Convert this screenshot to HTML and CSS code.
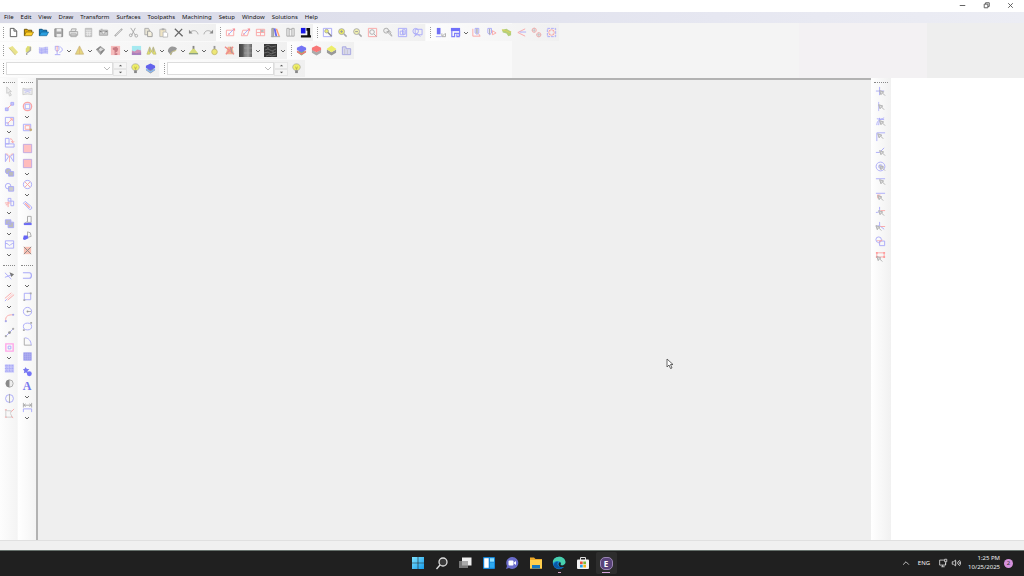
FILE: index.html
```
<!DOCTYPE html>
<html lang="en">
<head>
<meta charset="utf-8">
<title>CAM Workspace</title>
<link rel="stylesheet" href="styles.css">
</head>
<body>
<svg class="sprite" aria-hidden="true">
  <symbol id="chev" viewBox="0 0 6 6"><path d="M1 2l2 2 2-2" fill="none" stroke="#666"/></symbol>
  <symbol id="lens" viewBox="0 0 12 12"><circle cx="5" cy="5" r="3.200"/><path d="M7.500 7.500l3 3" stroke-width="1.600"/></symbol>
  <symbol id="arrow" viewBox="0 0 12 12"><path d="M5 5l4.500 1.500-1.500 1 3 3M5 5l1.500 4.500 1-1.500" fill="#ccc" stroke="#b0b0b0"/></symbol>
  <symbol id="bulb" viewBox="0 0 12 12"><path d="M4 8C2 6 1.500 5 2 3.500 3 0 9 0 10 3.500 10.500 5 10 6 8 8z" fill="#eeee66" stroke="#aaa" stroke-width=".8"/><path d="M5 4l1 3 1-3" fill="none" stroke="#aaa040" stroke-width=".7"/><path d="M4.500 8h3v3h-3z" fill="#888"/></symbol>
</svg>

<header class="titlebar">
  <button aria-label="Minimize"><svg viewBox="0 0 12 12"><path d="M3 6h6" class="k"/></svg></button>
  <button aria-label="Restore"><svg viewBox="0 0 12 12"><path d="M3.500 4.500h4v4h-4zM5 4.500v-1.500h4v4h-1.500" class="k"/></svg></button>
  <button aria-label="Close"><svg viewBox="0 0 12 12"><path d="M3.500 3.500l5 5m0-5l-5 5" class="k"/></svg></button>
</header>

<nav class="menu">
  <a href="#">File</a><a href="#">Edit</a><a href="#">View</a><a href="#">Draw</a><a href="#">Transform</a><a href="#">Surfaces</a><a href="#">Toolpaths</a><a href="#">Machining</a><a href="#">Setup</a><a href="#">Window</a><a href="#">Solutions</a><a href="#">Help</a>
</nav>

<section class="toolbars">
  <div class="row">
    <div class="group">
      <button aria-label="New"><svg viewBox="0 0 12 12"><path d="M2.500 1.500h4l3 3v6h-7zM6.500 1.500v3h3" class="k" fill="#fff"/></svg></button>
      <button aria-label="Open"><svg viewBox="0 0 12 12"><path d="M1.500 9.500v-7h3l1 1h4v2" fill="#e0a800" stroke="#66500a"/><path d="M1.500 9.500l2-4h8l-2 4z" fill="#ffd02a" stroke="#806410" stroke-width=".7"/></svg></button>
      <button aria-label="Import"><svg viewBox="0 0 12 12"><path d="M1.500 9.500v-7h3l1 1h4v2" fill="#1684c4" stroke="#0b4d78"/><path d="M1.500 9.500l2-4h8l-2 4z" fill="#2aa0e0" stroke="#126090" stroke-width=".7"/></svg></button>
      <button aria-label="Save"><svg viewBox="0 0 12 12"><path d="M2 2h8.500v8.500H2z" fill="#aaa" stroke="#888"/><path d="M4 2h5v3H4zM4 7.500h5v3H4z" fill="#eee"/></svg></button>
      <button aria-label="Print"><svg viewBox="0 0 12 12"><path d="M3 5l1-3h5l-1 3zM1.500 5h9v4h-9zM3 7.500h6v3H3z" class="g" fill="#e6e6e6"/></svg></button>
      <button aria-label="Report"><svg viewBox="0 0 12 12"><path d="M2.500 1.500h7v9h-7z" fill="#ccc" stroke="#bbb"/><path d="M3 4h6M3 6h6M3 8h6M5 5v5M7 5v5" stroke="#eee" stroke-width=".7"/></svg></button>
      <button aria-label="Snapshot"><svg viewBox="0 0 12 12"><path d="M1.500 3.500h9v5.500h-9zM3 2.500h2" class="g" fill="#ccc"/><circle cx="6" cy="6" r="1.500" class="g" fill="#eee"/><path d="M2 5h2M8 5h2" stroke="#777"/></svg></button>
      <button aria-label="Pencil"><svg viewBox="0 0 12 12"><path d="M2 10l8-8" stroke="#aaa" stroke-width="2"/><path d="M3 9l6-6" stroke="#e5e5e5" stroke-width=".8"/></svg></button>
      <button aria-label="Cut"><svg viewBox="0 0 12 12"><path d="M3 1l5 8M8 1L4 9" class="g"/><circle cx="3" cy="9" r="1.500" class="g"/><circle cx="9" cy="9.500" r="1.500" class="g"/></svg></button>
      <button aria-label="Copy"><svg viewBox="0 0 12 12"><path d="M2 1.500h4l1 2v5H2z" fill="#e8e4d4" stroke="#aaa"/><path d="M5 4.500h3l2 2v4H5z" fill="#f5f0de" stroke="#999"/></svg></button>
      <button aria-label="Paste"><svg viewBox="0 0 12 12"><path d="M2 2.500h6.500v8H2z" fill="#efe4c4" stroke="#bbb"/><path d="M4 1.500h3v2H4z" fill="#aaa"/><path d="M5.500 5.500H9l1.500 1.500v4h-5z" fill="#fff" stroke="#bbb"/></svg></button>
      <button aria-label="Delete"><svg viewBox="0 0 12 12"><path d="M2 2l8.500 8M10 2L2 10.500" stroke="#666" stroke-width="1.400"/></svg></button>
      <button aria-label="Undo"><svg viewBox="0 0 12 12"><path d="M1 3v4h4z" fill="#888"/><path d="M3 5c4-2 7-1 8 3" class="g"/></svg></button>
      <button aria-label="Redo"><svg viewBox="0 0 12 12"><path d="M11 3v4H7z" fill="#888"/><path d="M9 5C5 3 2 4 1 8" class="g"/></svg></button>
    </div>
    <div class="group">
      <button aria-label="Set plane"><svg viewBox="0 0 12 12"><path d="M1.500 3.500h8v6h-8z" class="r"/><path d="M4 8l6-6" class="b"/><path d="M3.500 8.500v-2l2 2zM8 1.500h3v3z" fill="#ff9090"/></svg></button>
      <button aria-label="Edit plane"><svg viewBox="0 0 12 12"><path d="M3 3.500h7l-2 6H1.500z" class="r"/><path d="M4 8l6-6" class="b"/><path d="M3.500 8.500v-2l2 2zM8 1.500h3v3z" fill="#ff9090"/></svg></button>
      <button aria-label="Grid"><svg viewBox="0 0 12 12"><path d="M1.500 2.500h9v7h-9zM1.500 6h9M6 2.500v7" class="r"/><path d="M6.500 3h3v2.500h-3z" fill="#bbb"/></svg></button>
      <button aria-label="Library"><svg viewBox="0 0 12 12"><path d="M2 1.500h2v9H2z" fill="#bbb" stroke="#999"/><path d="M5 1.500l2 9" stroke="#6868f0" stroke-width="2"/><path d="M7 2l3 8" stroke="#ff9a70" stroke-width="1.500"/><path d="M1 10.500h10" class="g"/></svg></button>
      <button aria-label="Materials"><svg viewBox="0 0 12 12"><path d="M2 1.500h2.500v8.500H2zM7.500 1.500h2.500v8.500H7.500zM4.500 2.500h3M4.500 10h3" class="g" fill="#eee"/></svg></button>
      <button aria-label="Machine"><svg viewBox="0 0 12 12"><path d="M1 1h5v6H1z" fill="#1818e8"/><path d="M7 1h4v8h1v2.500H1V9h7V4H7z" fill="#111"/></svg></button>
    </div>
    <div class="group">
      <button aria-label="Zoom window"><svg viewBox="0 0 12 12"><path d="M1.500 1.500h9v9h-9z" class="b"/><circle cx="5" cy="4.500" r="2" fill="#eef070" class="g"/><path d="M6.500 6l4 4" stroke="#888" stroke-width="1.500"/></svg></button>
      <button aria-label="Zoom in"><svg viewBox="0 0 12 12"><use href="#lens" fill="#eeee60" stroke="#aaa"/><path d="M3.500 5h3M5 3.500v3" stroke="#999"/></svg></button>
      <button aria-label="Zoom out"><svg viewBox="0 0 12 12"><use href="#lens" fill="#f0f0b0" stroke="#aaa"/><path d="M3.500 5h3" stroke="#999"/></svg></button>
      <button aria-label="Zoom extents"><svg viewBox="0 0 12 12"><path d="M1.500 1.500h9v9h-9z" class="r"/><circle cx="5.500" cy="5.500" r="2.500" class="g"/><path d="M7.500 7.500l3 3" class="g"/></svg></button>
      <button aria-label="Previous zoom"><svg viewBox="0 0 12 12"><circle cx="4.500" cy="4" r="2.700" class="g" fill="#eee"/><path d="M7 3l3 3M5 5h3l3 5M6.500 6l4 4" class="g"/></svg></button>
      <button aria-label="Zoom selection"><svg viewBox="0 0 12 12"><path d="M1.500 1.500h9v9h-9z" class="b"/><path d="M3.500 4.500h4v4h-4zM6 3h3v5H6z" class="b"/></svg></button>
      <button aria-label="Zoom objects"><svg viewBox="0 0 12 12"><path d="M3.500 2.500h7.500v6H3.500z" class="b"/><circle cx="4" cy="4.500" r="3" class="b"/><path d="M2 10.500l4-3 3 3" class="b"/></svg></button>
    </div>
    <div class="group spaced">
      <button aria-label="Tool"><svg viewBox="0 0 12 12"><path d="M2 1h4v7H2z" fill="#7070f5"/><path d="M1 10.500h6" class="b"/><path d="M7.500 7v3.500h4V7M8 10l3-3" class="g"/></svg></button>
      <button aria-label="Layout"><svg viewBox="0 0 12 12"><path d="M1 1h10v3.500H1z" fill="#7070fa"/><path d="M2 4v6.500h3V7h5v3.500H7.500V8M10.500 4v6" stroke="#8080fa" stroke-width="1.300" fill="none"/></svg></button>
      <button class="drop" aria-label="Layout options"><svg viewBox="0 0 6 6"><use href="#chev"/></svg></button>
      <button aria-label="Tool path"><svg viewBox="0 0 12 12"><path d="M2 2v8h8l-2-3" class="r"/><path d="M4.500 1.500h4v5L6.500 8 4.500 6.500z" class="b"/><path d="M6.500 2v5" stroke="#888"/></svg></button>
      <button aria-label="Simulate"><svg viewBox="0 0 12 12"><path d="M2 1.500h4v5L4 8.500 2 6.500z" class="b"/><path d="M4 2v6" stroke="#999"/><path d="M7 4l4 2.500-4 2z" class="r"/></svg></button>
      <button aria-label="Stock"><svg viewBox="0 0 12 12"><path d="M1 3l5-1 5 3v4l-3 1-2-3-4-1z" fill="#b4cf7c"/><path d="M1 3l4 1 4 2 2-1" stroke="#dfd45a" fill="none"/></svg></button>
      <button aria-label="Angle"><svg viewBox="0 0 12 12"><path d="M10 2L2 6l8 4" class="r"/><path d="M4 5.500h7" class="b"/></svg></button>
      <button aria-label="Link points"><svg viewBox="0 0 12 12"><circle cx="3.500" cy="3.500" r="2.300" class="r"/><circle cx="8.500" cy="8.500" r="2.300" class="r"/><path d="M3.500 1v5M8.500 6v5M1 3.500h4M6 8.500h5" stroke="#bbb" stroke-width=".8"/></svg></button>
      <button aria-label="Nest"><svg viewBox="0 0 12 12"><path d="M1.500 1.500h9v9h-9z" class="b" stroke-dasharray="3 1"/><circle cx="6" cy="6" r="3" class="r"/><path d="M3 3l1.500 1.500M9 3L7.500 4.500M3 9l1.500-1.500M9 9L7.500 7.500" class="r"/></svg></button>
    </div>
  </div>

  <div class="row">
    <div class="group">
      <button aria-label="Surface"><svg viewBox="0 0 12 12"><path d="M1 3l4-2 6 7-3 3z" fill="#e9e38b"/><path d="M1 3l7 8" stroke="#c8c080"/></svg></button>
      <button aria-label="Revolve"><svg viewBox="0 0 12 12"><path d="M5 1l4 1v4L5 8H3V4z" fill="#dede72"/><path d="M8 2v4L4 9v2" stroke="#aaa" fill="none" stroke-width="1.500"/></svg></button>
      <button aria-label="Patch"><svg viewBox="0 0 12 12"><path d="M1 2c3 2 6-1 10 0v8c-4-2-7 1-10-1z" fill="#c6c6f7"/><path d="M1 5c3 2 6-1 10 0M1 7.500c3 2 6-1 10 0M4 3v7M8 2v7" class="b" stroke-width=".7"/></svg></button>
      <button aria-label="Goblet"><svg viewBox="0 0 12 12"><path d="M2 1.500h5M2.500 2v3c0 2 4 2 4 0V2M4.500 6v4M2 10.500h6M8 2c3 2 3 5-1 6" class="b"/><path d="M4.500 1v6" class="r"/></svg></button>
      <button class="drop" aria-label="Goblet options"><svg viewBox="0 0 6 6"><use href="#chev"/></svg></button>
      <button aria-label="Cone"><svg viewBox="0 0 12 12"><path d="M6 1l4.500 9h-9z" fill="#e6d57e" stroke="#c2ae78" stroke-width=".7"/><path d="M6 2v8" stroke="#dbb273" stroke-width=".7"/></svg></button>
      <button class="drop" aria-label="Cone options"><svg viewBox="0 0 6 6"><use href="#chev"/></svg></button>
      <button aria-label="Solid"><svg viewBox="0 0 12 12"><path d="M6 1l5 4-5 6-5-6z" fill="#aaa"/><path d="M1 5l5-4v5z" fill="#888"/><path d="M6 6l5-1-5 6z" fill="#888"/><path d="M4 5l2-2 3 2-3 2z" fill="#ddd"/></svg></button>
      <button aria-label="Relief"><svg viewBox="0 0 12 12"><path d="M1 1h10v10H1z" fill="#f6bcbc"/><path d="M3 3l4-1 2 2-1 3-3 2V6L3 5zM5 9h3v2H5z" fill="#c87a82"/></svg></button>
      <button class="drop" aria-label="Relief options"><svg viewBox="0 0 6 6"><use href="#chev"/></svg></button>
      <button aria-label="Image"><svg viewBox="0 0 12 12"><path d="M1 1h10v10H1z" fill="#a5e9f0"/><path d="M1 6l3 1 3-2 4 1v5H1z" fill="#cd91b9"/><path d="M1 8l5 1 5-1v3H1z" fill="#a880bd"/></svg></button>
      <button aria-label="Peaks"><svg viewBox="0 0 12 12"><path d="M1 10l3-8 2 5 2-5 3 8H8L6 7l-2 3z" fill="#e3e26a" stroke="#b8b47a" stroke-width=".7"/><path d="M4 3v5M8 3v5" stroke="#aaa"/></svg></button>
      <button class="drop" aria-label="Peaks options"><svg viewBox="0 0 6 6"><use href="#chev"/></svg></button>
      <button aria-label="Sculpt"><svg viewBox="0 0 12 12"><path d="M1 7c0-6 7-7 10-3L8 7c-3 0-2 3-4 4z" fill="#999"/><path d="M4 11c0-4 2-4 6-5" stroke="#ccc680" fill="none"/></svg></button>
      <button class="drop" aria-label="Sculpt options"><svg viewBox="0 0 6 6"><use href="#chev"/></svg></button>
      <button aria-label="Emboss"><svg viewBox="0 0 12 12"><path d="M5 1h2v4H5z" fill="#888"/><path d="M5 4h2l4 5H1z" fill="#d5db79"/><path d="M1 9.500h10" stroke="#8ba080" stroke-width="1.500"/></svg></button>
      <button class="drop" aria-label="Emboss options"><svg viewBox="0 0 6 6"><use href="#chev"/></svg></button>
      <button aria-label="Ring"><svg viewBox="0 0 12 12"><path d="M5 1h2v4H5z" fill="#999"/><circle cx="6" cy="7.500" r="3" fill="#eee775" stroke="#c5bc70"/></svg></button>
      <button aria-label="Remove relief"><svg viewBox="0 0 12 12"><path d="M2 10l2-8h5l2 8z" fill="#f0b590"/><path d="M1 2l10 8M10 2L2 10" stroke="#f08c8c" stroke-width="1.500"/><path d="M7 2l2 7" stroke="#999"/></svg></button>
      <button class="swatch" aria-label="Shading"><svg viewBox="0 0 13 13"><defs><linearGradient id="sh"><stop offset="0" stop-color="#444"/><stop offset=".28" stop-color="#555"/><stop offset=".45" stop-color="#888"/><stop offset=".7" stop-color="#999"/><stop offset="1" stop-color="#666"/></linearGradient></defs><path d="M0 0h13v13H0z" fill="url(#sh)"/><path d="M5 4h8M5 9h8M9 0v13" stroke="#aaa" stroke-width=".6"/></svg></button>
      <button class="drop wide" aria-label="Shading options"><svg viewBox="0 0 6 6"><use href="#chev"/></svg></button>
      <button class="swatch" aria-label="Texture"><svg viewBox="0 0 13 13"><path d="M0 0h13v13H0z" fill="#383838"/><path d="M0 3l4-2 3 2 5-1M1 6l3-1 4 2 4-2M0 9l4-1 3 2 5-2M2 12l3-1 3 1 4-1M4 3v2M9 7v2" stroke="#777" fill="none" stroke-width=".8"/></svg></button>
      <button class="drop wide" aria-label="Texture options"><svg viewBox="0 0 6 6"><use href="#chev"/></svg></button>
    </div>
    <div class="group">
      <button aria-label="All layers"><svg viewBox="0 0 12 12"><path d="M1 8l5 3.500L11 8 6 5z" fill="#78bd78"/><path d="M1 6l5 3 5-3v2l-5 3-5-3z" fill="#f07777"/><path d="M1 3l5-2.500L11 3v2.500L6 8 1 5.500z" fill="#7474f4"/></svg></button>
      <button aria-label="Red layer"><svg viewBox="0 0 12 12"><path d="M1 5l5 3 5-3v3.500l-5 3-5-3z" fill="#aaa"/><path d="M1 3l5-2.500L11 3v2.500L6 8 1 5.500z" fill="#f87777"/></svg></button>
      <button aria-label="Yellow layer"><svg viewBox="0 0 12 12"><path d="M1 5l5 3 5-3v3.500l-5 3-5-3z" fill="#999"/><path d="M1 4l5-3.500L11 4v1L6 8 1 5z" fill="#eded6a"/></svg></button>
      <button aria-label="Folder"><svg viewBox="0 0 12 12"><path d="M1.500 2h4v2h5v6.500h-9z" fill="#d8d8ee" stroke="#a5a5e0"/><path d="M4 4v6M7 5v5" stroke="#bbb" stroke-width=".7"/></svg></button>
    </div>
  </div>

  <div class="row fields">
    <div class="group">
      <select aria-label="Layer"><option></option></select>
      <div class="spin"><button aria-label="Next layer"><svg viewBox="0 0 6 6"><path d="M1 4l2-2 2 2z" fill="#555"/></svg></button><button aria-label="Previous layer"><svg viewBox="0 0 6 6"><path d="M1 2l2 2 2-2z" fill="#555"/></svg></button></div>
      <button aria-label="Layer visibility"><svg viewBox="0 0 12 12"><use href="#bulb"/></svg></button>
      <button aria-label="Layer manager"><svg viewBox="0 0 12 12"><path d="M1 8l5 3.500L11 8 6 5z" fill="#999"/><path d="M1 6l5 3 5-3v1.500l-5 3-5-3z" fill="#88b8f8"/><path d="M1 3l5-2.500L11 3v2.500L6 8 1 5.500z" fill="#6262ec"/></svg></button>
    </div>
    <div class="group">
      <select aria-label="Relief layer"><option></option></select>
      <div class="spin"><button aria-label="Next relief"><svg viewBox="0 0 6 6"><path d="M1 4l2-2 2 2z" fill="#555"/></svg></button><button aria-label="Previous relief"><svg viewBox="0 0 6 6"><path d="M1 2l2 2 2-2z" fill="#555"/></svg></button></div>
      <button aria-label="Relief visibility"><svg viewBox="0 0 12 12"><use href="#bulb"/></svg></button>
    </div>
  </div>
</section>

<main class="work">
  <aside class="tools">
    <div class="stack">
      <button aria-label="Select"><svg viewBox="0 0 12 12"><path d="M3 1l5 5H6l2 4-2 1-1-4-2 1z" fill="#eee" stroke="#ccc"/></svg></button>
      <button aria-label="Move"><svg viewBox="0 0 12 12"><path d="M1.500 7.500h3v3h-3zM7.500 1.500h3v3h-3z" class="b" fill="#c5c5fa"/><path d="M4 8l4-4" class="r"/></svg></button>
      <button aria-label="Scale"><svg viewBox="0 0 12 12"><path d="M1.500 1.500h9v9h-9zM1.500 7.500h3v3" class="b"/><path d="M4 8l5-5M6.500 3H9v2.500" class="r"/></svg></button>
      <button class="drop" aria-label="Scale options"><svg viewBox="0 0 6 6"><use href="#chev"/></svg></button>
      <button aria-label="Rotate"><svg viewBox="0 0 12 12"><path d="M1.500 1.500h4v6h-4zM1.500 7.500h9.500v3.500H1.500z" class="b"/><path d="M6.500 2c2 0 3 1 3 4M8 4.500l1.500 2 1.500-2" class="r"/></svg></button>
      <button aria-label="Mirror"><svg viewBox="0 0 12 12"><path d="M1.500 2v8.500L5 5zM10.500 2v8.500L7 5z" class="b"/><path d="M2 2c2 0 3 1 4 3 1-2 2-3 4-3M6 5v6" class="r" stroke-width=".8"/></svg></button>
      <button aria-label="Weld"><svg viewBox="0 0 12 12"><circle cx="4.500" cy="4.500" r="3" class="b" fill="#bbb"/><path d="M5 5h5.500v5H5z" class="b" fill="#bbb"/></svg></button>
      <button aria-label="Subtract"><svg viewBox="0 0 12 12"><circle cx="4.500" cy="4.500" r="3" class="b"/><path d="M5 5h5.500v5H5z" class="b" fill="#ccc"/></svg></button>
      <button aria-label="Align"><svg viewBox="0 0 12 12"><path d="M7.500 4.500h3v5h-3z" class="b"/><path d="M4.500 1.500h3v3h-3z" class="b"/><path d="M1 6.500h6M4.500 5v6M2 8.500h2" class="r"/></svg></button>
      <button class="drop" aria-label="Align options"><svg viewBox="0 0 6 6"><use href="#chev"/></svg></button>
      <button aria-label="Group"><svg viewBox="0 0 12 12"><path d="M1.500 2h6v5h-6zM4.500 4.500h6v6h-6z" class="b" fill="#bbb"/></svg></button>
      <button class="drop" aria-label="Group options"><svg viewBox="0 0 6 6"><use href="#chev"/></svg></button>
      <button aria-label="Envelope"><svg viewBox="0 0 12 12"><path d="M1.500 2h9v8h-9zM1.500 5c3-1 3 2 4.500 2s2-3 4.500-2" class="b"/></svg></button>
      <button class="drop" aria-label="Envelope options"><svg viewBox="0 0 6 6"><use href="#chev"/></svg></button>
    </div>
    <div class="stack">
      <button aria-label="Distort"><svg viewBox="0 0 12 12"><path d="M1 2.500c3 1 7 1 10 0v7c-3-1-7-1-10 0z" stroke="#ccc" fill="#eee"/><path d="M2 4.500h8M3 7l3-1 3 1" class="b" stroke-width=".7"/></svg></button>
      <button aria-label="Offset"><svg viewBox="0 0 12 12"><circle cx="6" cy="6" r="4.500" class="r" stroke-width="1.500"/><path d="M3.500 3.500h5v5h-5z" class="b"/></svg></button>
      <button class="drop" aria-label="Offset options"><svg viewBox="0 0 6 6"><use href="#chev"/></svg></button>
      <button aria-label="Outline"><svg viewBox="0 0 12 12"><path d="M1.500 2.500h8v7h-8z" class="b"/><path d="M3.500 4h5v4h-5z" class="r"/><circle cx="9.500" cy="8.500" r="1.500" fill="#c5ae78"/></svg></button>
      <button class="drop" aria-label="Outline options"><svg viewBox="0 0 6 6"><use href="#chev"/></svg></button>
      <button aria-label="Fill"><svg viewBox="0 0 12 12"><path d="M1.500 1.500h9v9h-9z" fill="#ffc2c2" stroke="#c0a8e0"/></svg></button>
      <button aria-label="Fill region"><svg viewBox="0 0 12 12"><path d="M1.500 1.500h9v9h-9z" fill="#ffbcbc" stroke="#c0a8e0"/></svg></button>
      <button class="drop" aria-label="Fill options"><svg viewBox="0 0 6 6"><use href="#chev"/></svg></button>
      <button aria-label="Trim circle"><svg viewBox="0 0 12 12"><circle cx="6" cy="6" r="4.500" class="b"/><path d="M3 3l6 6M9 3L3 9" class="r"/></svg></button>
      <button class="drop" aria-label="Trim options"><svg viewBox="0 0 6 6"><use href="#chev"/></svg></button>
      <button aria-label="Eraser"><svg viewBox="0 0 12 12"><path d="M1.500 3.500l2-2 7 6v2l-2 1z" class="b"/><path d="M3.500 3.500l5 5" class="r" stroke-width="1.500"/></svg></button>
      <button aria-label="Pour"><svg viewBox="0 0 12 12"><path d="M6 1.500h4V8H6z" class="g"/><path d="M2 8.500h8.500V11H2z" fill="#6c6cf5"/><path d="M6 2v5L3 9" class="g"/></svg></button>
      <button aria-label="Paint"><svg viewBox="0 0 12 12"><path d="M6 2l3 1 1 4-4 1z" class="g"/><path d="M2 6h4l1 3-4 2-2-1z" fill="#6666f5"/></svg></button>
      <button aria-label="Delete nodes"><svg viewBox="0 0 12 12"><path d="M2 2h8v8H2z" fill="#f9c0b4"/><path d="M2 2l8 8M10 2L2 10" stroke="#888"/></svg></button>
    </div>
    <div class="stack">
      <button aria-label="Node edit"><svg viewBox="0 0 12 12"><path d="M1 3l7 7M1 8l8-3" class="b"/><path d="M6 2.500l5 2-3 3z" fill="#777"/></svg></button>
      <button class="drop" aria-label="Node options"><svg viewBox="0 0 6 6"><use href="#chev"/></svg></button>
      <button aria-label="Measure"><svg viewBox="0 0 12 12"><path d="M1 8l7-6M4 10l7-6" class="r"/><path d="M2.500 9.500l7-6.500" stroke="#ffc8c8"/><path d="M1 11l2-2" class="b"/></svg></button>
      <button class="drop" aria-label="Measure options"><svg viewBox="0 0 6 6"><use href="#chev"/></svg></button>
      <button aria-label="Curve"><svg viewBox="0 0 12 12"><path d="M2 10c-1-6 3-7 8-7" class="r"/><circle cx="2" cy="10" r="1.200" fill="#a8a8e8"/><circle cx="10" cy="3" r="1.200" fill="#a8a8e8"/></svg></button>
      <button aria-label="Line"><svg viewBox="0 0 12 12"><path d="M2 10l8-8" class="b"/><circle cx="2" cy="10" r="1.200" fill="#aaa"/><circle cx="6" cy="6" r="1.500" fill="#999"/><circle cx="10" cy="2" r="1.200" fill="#aaa"/></svg></button>
      <button aria-label="Inset"><svg viewBox="0 0 12 12"><path d="M2 2h8v8H2z" stroke="#ffa5e8" stroke-width="1.500" fill="none"/><path d="M4.500 4.500h3v3h-3z" class="b"/></svg></button>
      <button class="drop" aria-label="Inset options"><svg viewBox="0 0 6 6"><use href="#chev"/></svg></button>
      <button aria-label="Mesh"><svg viewBox="0 0 12 12"><path d="M1 1.500h10v9H1z" fill="#c8c8fa"/><path d="M1 3h10M1 6h10M1 9h10M3 2v8M6 2v8M9 2v8" stroke="#a0a0f4" stroke-dasharray="1 1"/></svg></button>
      <button aria-label="Contrast"><svg viewBox="0 0 12 12"><circle cx="6" cy="6" r="4" fill="#eee" stroke="#aaa"/><path d="M6 2a4 4 0 0 0 0 8z" fill="#888"/></svg></button>
      <button aria-label="Split"><svg viewBox="0 0 12 12"><circle cx="6" cy="6" r="4.300" class="b"/><path d="M6 1v10" class="g"/></svg></button>
      <button aria-label="Warp"><svg viewBox="0 0 12 12"><path d="M2 2l2 1h4L7 6l2 4H2z" stroke="#ccc" fill="none"/><path d="M8 4l3-3M1 2h2M1 10h2M8 9l2 2" class="r"/></svg></button>
    </div>
    <div class="stack">
      <button aria-label="Polyline"><svg viewBox="0 0 12 12"><path d="M1 3h7c3 0 3 6 0 6H1" class="b" stroke-width="1.300"/></svg></button>
      <button class="drop" aria-label="Polyline options"><svg viewBox="0 0 6 6"><use href="#chev"/></svg></button>
      <button aria-label="Rectangle"><svg viewBox="0 0 12 12"><path d="M2.500 2.500h7v7h-7z" class="b"/><path d="M1.500 9h2v2h-2zM8.500 1.500h2v2h-2z" fill="#aaa"/></svg></button>
      <button aria-label="Circle"><svg viewBox="0 0 12 12"><circle cx="6" cy="6" r="4.500" class="b"/><path d="M6 6h4" class="g"/><circle cx="6" cy="6" r="1" fill="#999"/></svg></button>
      <button aria-label="Ellipse"><svg viewBox="0 0 12 12"><ellipse cx="6" cy="6" rx="4.500" ry="3.700" class="b"/><path d="M1 9h2v2H1zM9 1h2v2H9z" fill="#aaa"/></svg></button>
      <button aria-label="Arc"><svg viewBox="0 0 12 12"><path d="M2.500 2v8h8" class="g"/><path d="M3 2c4 0 7 3 7 8" class="b"/></svg></button>
      <button aria-label="Pattern"><svg viewBox="0 0 12 12"><path d="M1.500 1.500h9v9h-9z" fill="#9b9bed"/><path d="M2 4h8M2 6h8M2 8h8M4 2v8M6 2v8M8 2v8" stroke="#b9b9ed" stroke-width=".5"/></svg></button>
      <button aria-label="Shapes"><svg viewBox="0 0 12 12"><path d="M4 1l1 2 3 .5-2 2 .5 2.500L4 7 2 8l.5-2.500L1 3.500 3 3z" fill="#7878ef"/><circle cx="8" cy="8.500" r="2.700" fill="#7474f8"/></svg></button>
      <button class="letter" aria-label="Text">A</button>
      <button class="drop" aria-label="Text options"><svg viewBox="0 0 6 6"><use href="#chev"/></svg></button>
      <button aria-label="Dimension"><svg viewBox="0 0 12 12"><path d="M1.500 1v5M10.500 1v5M2 3.500h8M4 2L2 3.500 4 5M8 2l2 1.500L8 5" class="g"/><path d="M1.500 11V7.500h9V11" class="b"/></svg></button>
      <button class="drop" aria-label="Dimension options"><svg viewBox="0 0 6 6"><use href="#chev"/></svg></button>
    </div>
  </aside>

  <div class="canvas">
    <svg class="pointer" viewBox="0 0 8 12"><path d="M1 1v8l2-2 1.500 3.500L6 10 4.500 6.500H7z" fill="#fff" stroke="#444" stroke-width=".8"/></svg>
  </div>

  <aside class="snaps">
    <div class="stack">
      <button aria-label="Snap grid"><svg viewBox="0 0 12 12"><path d="M5 1v9M1 5.500h9" class="b"/><use href="#arrow"/></svg></button>
      <button aria-label="Snap line"><svg viewBox="0 0 12 12"><path d="M4 1v10" class="b" stroke-width=".8"/><use href="#arrow" x="-1" y="-1"/></svg></button>
      <button aria-label="Snap intersection"><svg viewBox="0 0 12 12"><path d="M2 10c0-5 3-6 8-8M2 3l8 1M5 2l-1 8" class="b"/><use href="#arrow"/></svg></button>
      <button aria-label="Snap corner"><svg viewBox="0 0 12 12"><path d="M2 11V2h9" class="b"/><use href="#arrow" x="-2" y="-2"/></svg></button>
      <button aria-label="Snap midpoint"><svg viewBox="0 0 12 12"><path d="M1 7h4l5-5" class="b"/><use href="#arrow"/></svg></button>
      <button aria-label="Snap center"><svg viewBox="0 0 12 12"><circle cx="6" cy="6" r="4.800" class="b"/><circle cx="6" cy="6" r="2" class="b"/><use href="#arrow"/></svg></button>
      <button aria-label="Snap edge"><svg viewBox="0 0 12 12"><path d="M1 3h10" class="b"/><use href="#arrow" y="-1"/></svg></button>
      <button aria-label="Snap perpendicular"><svg viewBox="0 0 12 12"><path d="M1 2.500h10" class="b"/><path d="M3 4v4M3 4.500h3" class="r"/><use href="#arrow" x="-2"/></svg></button>
      <button aria-label="Snap tangent"><svg viewBox="0 0 12 12"><path d="M5 1v3c0 3-2 3-4 3" class="b"/><path d="M6 5h5" class="r"/><use href="#arrow" x="-1"/></svg></button>
      <button aria-label="Snap quadrant"><svg viewBox="0 0 12 12"><path d="M5 1v4l5 4M1 6l4-1" class="b"/><path d="M6 6h5" class="r"/><use href="#arrow" x="-4"/></svg></button>
      <button aria-label="Snap objects"><svg viewBox="0 0 12 12"><circle cx="4" cy="4" r="3" class="b"/><path d="M5 5.500h5.500v5H5z" class="b"/><path d="M2 5h6M4 8l4-4" class="r" stroke-width=".7"/></svg></button>
      <button aria-label="Snap guide"><svg viewBox="0 0 12 12"><path d="M2 2h8v4.500H2z" class="r"/><path d="M1 1h2v2H1zM9 1h2v2H9zM9 5.500h2v2H9zM1 5.500h2v2H1z" fill="#ff9c9c"/><use href="#arrow" x="-3" y="1"/></svg></button>
    </div>
  </aside>
  <section class="panel" aria-label="Properties"></section>
</main>

<div class="status"></div>

<footer class="taskbar">
  <div class="apps">
    <button aria-label="Start"><svg viewBox="0 0 14 14"><defs><linearGradient id="win" x2="1" y2="1"><stop stop-color="#7fe2ff"/><stop offset="1" stop-color="#169be8"/></linearGradient></defs><path d="M1 1h5.700v5.700H1zM7.300 1H13v5.700H7.300zM1 7.300h5.700V13H1zM7.300 7.300H13V13H7.300z" fill="url(#win)"/></svg></button>
    <button aria-label="Search"><svg viewBox="0 0 14 14"><circle cx="8" cy="6" r="4" fill="#3a3a3a" stroke="#ddd" stroke-width="1.300"/><path d="M5 9l-3.500 4" stroke="#ddd" stroke-width="1.300"/></svg></button>
    <button aria-label="Task view"><svg viewBox="0 0 14 14"><path d="M4 1.500h9.500v8H4z" fill="#eee"/><path d="M1 5h9v7H1z" fill="#777"/><path d="M4 5h6v4.500H4z" fill="#aaa"/></svg></button>
    <button aria-label="Widgets"><svg viewBox="0 0 14 14"><rect x="1" y="1" width="12" height="12" rx="1" fill="#1583d4"/><path d="M2.200 2.200h4.500v9.600H2.200z" fill="#fff"/><path d="M8 2.200h4v3.500H8z" fill="#8de0ff"/><path d="M8 6.500h4v5.300H8z" fill="#2daaf1"/></svg></button>
    <button aria-label="Chat"><svg viewBox="0 0 14 14"><path d="M7 1a6 6 0 1 1-3 11l-3 1 1-3A6 6 0 0 1 7 1z" fill="#696bc9"/><rect x="3.500" y="4.500" width="5" height="5" rx="1" fill="#fff"/><path d="M9 6.500L11 5v4L9 7.500z" fill="#fff"/></svg></button>
    <button aria-label="File Explorer"><svg viewBox="0 0 14 14"><path d="M1 1.500h4l1.500 1.500H13v9.500H1z" fill="#efaa28"/><path d="M1 4h12v8.500H1z" fill="#ffd04d"/><path d="M3 12.500V9h8v3.500z" fill="#1779bf"/></svg></button>
    <button class="running" aria-label="Edge"><svg viewBox="0 0 14 14"><circle cx="7" cy="7" r="6.200" fill="#168fd3"/><path d="M2 3c4-4 11-2 11.500 3 0 3-3 4-5 3 1-2 0-4-3-4S1 7 1 7s-.5-2 1-4z" fill="#48d0ac"/><path d="M6 6c-2 3 1 6 6 5-3 3-9 2-10-1-1-2 2-5 4-4z" fill="#0b57a5"/><path d="M8 6c1 1 1 2 .5 3 2 1 4 0 5-2l-.5 4L8 11C6 9 6 7 8 6z" fill="#202020"/></svg></button>
    <button aria-label="Store"><svg viewBox="0 0 14 14"><path d="M4.500 4V1.500h5V4" stroke="#ddd" fill="none"/><rect x="1" y="3.500" width="12" height="9.500" rx="1" fill="#f4f4f4"/><path d="M4 5.500h2.700v2.700H4z" fill="#ee5136"/><path d="M7.300 5.500H10v2.700H7.300z" fill="#7cba35"/><path d="M4 8.800h2.700v2.700H4z" fill="#27a2e8"/><path d="M7.300 8.800H10v2.700H7.300z" fill="#f8b81c"/></svg></button>
    <button class="current" aria-label="CAM application"><span class="logo">E</span></button>
  </div>
  <div class="tray">
    <button aria-label="Hidden icons"><svg viewBox="0 0 12 12"><path d="M2.500 8l3.500-3.500L9.500 8" class="w"/></svg></button>
    <button class="lang">ENG</button>
    <button aria-label="Network"><svg viewBox="0 0 12 12"><path d="M8 2.500H2v6h7V6M4 10.500h4M5.500 8.500v2M8 1.500h2.500v3H8zM9.200 4.500v4" class="w"/></svg></button>
    <button aria-label="Volume"><svg viewBox="0 0 12 12"><path d="M1.500 4.500H3l2.500-2v7L3 7.500H1.500zM7 4.500c1 1 1 2 0 3M8.500 3.500c2 2 2 3 0 5M10 2.500c2 2 2 5 0 7" class="w"/></svg></button>
    <div class="clock"><time>1:25 PM</time><time>10/25/2025</time></div>
    <button class="badge" aria-label="2 notifications">2</button>
  </div>
</footer>
</body>
</html>
```
FILE: styles.css
```
* {
  box-sizing: border-box;
}

body {
  margin: 0;
  height: 100vh;
  display: flex;
  flex-direction: column;
  overflow: hidden;
  background: #fff;
  font-family: "Noto Sans", "Open Sans", sans-serif;
  font-size: 6px;
  color: #222;
}

.sprite {
  display: none;
}

button {
  display: flex;
  align-items: center;
  justify-content: center;
  flex: none;
  width: 15px;
  height: 15px;
  padding: 0;
  border: 0;
  background: none;
  font: inherit;
  color: inherit;
}

svg {
  display: block;
  width: 11px;
  height: 11px;
}

.b { stroke: #a9a9f8; }
.r { stroke: #faa5a5; }
.g { stroke: #a8a8a8; }
.k { stroke: #555; }
.w { stroke: #ddd; }

.b:not([fill]), .r:not([fill]), .g:not([fill]), .k:not([fill]), .w:not([fill]) {
  fill: none;
}

.titlebar {
  display: flex;
  justify-content: flex-end;
  gap: 9px;
  height: 12px;
  padding-right: 6px;
}

.titlebar button {
  height: 11px;
}

.menu {
  display: flex;
  align-items: center;
  gap: 7px;
  height: 11px;
  padding-left: 4px;
  background: linear-gradient(90deg, #d8d9e7, #e6e7f1 70%, #ecedf4);
}

.menu a {
  color: #111;
  line-height: 11px;
  text-decoration: none;
}

.toolbars {
  padding-top: 1px;
  background: linear-gradient(90deg, #f9f9f9 50%, #f4f4f4 50% 78%, #f3f1f3 78% 90.500%, #eee 90.500%);
}

.row {
  display: flex;
  height: 18px;
}

.group {
  display: flex;
  align-items: center;
  position: relative;
  padding-left: 7px;
  height: 17px;
  background: linear-gradient(90deg, #fdfdfd, #f0f0f0);
}

.group:first-child {
  padding-left: 6px;
}

.group::before {
  content: "";
  position: absolute;
  left: 4px;
  top: 3px;
  bottom: 3px;
  border-left: 1px dotted #999;
}

.group:first-child::before {
  left: 3px;
}

.group.spaced {
  margin-left: 1px;
}

.group .drop {
  width: 6px;
}

.group .drop.wide {
  width: 8px;
}

.drop svg {
  width: 6px;
  height: 6px;
}

.group .swatch {
  width: 17px;
}

.swatch svg {
  width: 13px;
  height: 13px;
}

.fields {
  gap: 1px;
}

.fields .group {
  padding-right: 1px;
}

select {
  width: 107px;
  height: 13px;
  border: 1px solid #ddd;
  border-radius: 0;
  appearance: none;
  background:
    linear-gradient(45deg, transparent 35%, #bbb 35% 65%, transparent 65%) right 5px top 4px / 3px 3px no-repeat,
    linear-gradient(-45deg, transparent 35%, #bbb 35% 65%, transparent 65%) right 2px top 4px / 3px 3px no-repeat,
    #fff;
  font: inherit;
}

.spin {
  display: flex;
  flex-direction: column;
  width: 14px;
  margin-right: 1px;
}

.spin button {
  width: 14px;
  height: 7px;
  border: 1px solid #e6e6e6;
  background: #f5f5f5;
}

.spin svg {
  width: 5px;
  height: 5px;
}

.work {
  flex: 1;
  display: flex;
  min-height: 0;
}

.tools {
  display: grid;
  grid-template-columns: 18px 18px;
  grid-template-rows: 181px auto;
  align-content: start;
  background: linear-gradient(90deg, #fdfdfd, #f4f4f4 48%, #fff 50%, #f4f4f4);
}

.stack {
  position: relative;
  display: flex;
  flex-direction: column;
  align-items: center;
  padding-top: 6px;
}

.tools .stack:nth-child(n + 3) {
  padding-top: 9px;
}

.stack::before {
  content: "";
  position: absolute;
  top: 4px;
  left: 3px;
  right: 3px;
  border-top: 1px dotted #888;
}

.tools .stack:nth-child(n + 3)::before {
  top: 6px;
}

.stack .drop {
  height: 6px;
}

.letter {
  font-family: "Liberation Serif", serif;
  font-size: 12px;
  font-weight: bold;
  color: #7777ee;
}

.canvas {
  flex: 1;
  position: relative;
  border-top: 2px solid #b2b2b2;
  border-left: 2px solid #b2b2b2;
  background: #efefef;
}

.pointer {
  position: absolute;
  left: 75.400%;
  top: 60.500%;
  width: 8px;
  height: 12px;
}

.snaps {
  width: 20px;
  background: linear-gradient(90deg, #fff, #f1f1f1);
}

.panel {
  width: 13%;
  background: #fff;
}

.status {
  height: 10px;
  border-top: 1px solid #e0e0e0;
  background: #f0f0f0;
}

.taskbar {
  display: grid;
  grid-template-columns: 1fr 209px 1fr;
  align-items: center;
  height: 26px;
  padding-bottom: 1px;
  border-top: 1px solid #66716c;
  background: #202020;
  color: #eee;
}

.apps {
  grid-column: 2;
  display: flex;
  justify-content: space-between;
}

.apps button {
  position: relative;
  width: 21px;
  height: 22px;
}

.apps svg {
  width: 14px;
  height: 14px;
}

.apps .current {
  border-radius: 2px;
  background: #2d2d2d;
}

.apps .running::after,
.apps .current::after {
  content: "";
  position: absolute;
  bottom: 1px;
  width: 3px;
  height: 1px;
  background: #d8a5c8;
}

.apps .current::after {
  width: 8px;
  background: #d6a4db;
}

.logo {
  width: 13px;
  height: 13px;
  border: 1px solid #9b86b4;
  border-radius: 5px;
  background: #59437a;
  font-size: 8px;
  font-weight: bold;
  line-height: 11px;
  color: #fff;
}

.tray {
  display: flex;
  align-items: center;
  justify-content: flex-end;
  padding-right: 11px;
}

.tray button {
  width: 13px;
}

.tray .lang {
  width: 24px;
}

.tray svg {
  width: 10px;
  height: 10px;
}

.clock {
  display: flex;
  flex-direction: column;
  width: 38px;
  text-align: right;
  line-height: 9px;
}

.tray .badge {
  width: 9px;
  height: 9px;
  margin-left: 4px;
  border-radius: 50%;
  background: #d691dc;
  color: #333;
}
```
